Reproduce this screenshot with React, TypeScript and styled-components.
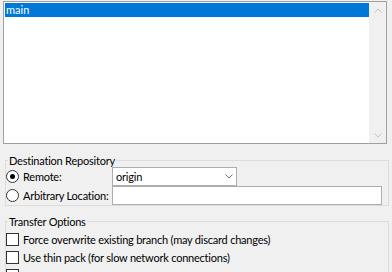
import React from 'react'
import styled, { createGlobalStyle } from 'styled-components'

const GlobalStyle = createGlobalStyle`
  html, body {
    margin: 0;
    padding: 0;
    background: #f0f0f0;
    overflow: hidden;
  }
  body {
    font-family: Lato, 'Noto Sans', sans-serif;
    font-size: 11px;
    letter-spacing: -0.22px;
    color: #000;
  }
`

const Page = styled.div`
  display: flex;
  flex-direction: column;
  padding: 1px 0 0 0;
  width: 392px;
  height: 272px;
  box-sizing: border-box;
  overflow: hidden;
  & > * {
    flex: none;
  }
`

const ListBox = styled.div`
  display: flex;
  margin: 0 5px 0 3px;
  height: 143px;
  box-sizing: border-box;
  border: 1px solid #a0a0a0;
  background: #fff;
`

const ListItems = styled.div`
  flex: 1;
  padding: 1px 0 0 1px;
`

const ListRow = styled.div<{ selected?: boolean }>`
  height: 14px;
  line-height: 13px;
  padding-left: 1px;
  letter-spacing: 0;
  background: ${({ selected }) => (selected ? '#0078d7' : 'transparent')};
  color: ${({ selected }) => (selected ? '#fff' : '#000')};
`

const ScrollBar = styled.div`
  width: 17px;
  background: #f0f0f0;
  display: flex;
  flex-direction: column;
  justify-content: space-between;
  align-items: center;
  padding: 6px 0 5px;
`

const Group = styled.fieldset<{ top: number }>`
  margin: ${({ top }) => top}px 3px 0 5px;
  padding: 0 5px 0 0;
  border: 1px solid #dcdcdc;
  min-width: 0;
`

const Legend = styled.legend`
  margin-left: 2px;
  padding: 0 1px;
  line-height: 13px;
`

const FormGrid = styled.div`
  display: grid;
  grid-template-columns: 106px auto;
  grid-auto-rows: 19px;
`

const Choice = styled.label`
  display: flex;
  align-items: center;
  gap: 4px;
  white-space: nowrap;
`

const Radio = styled.span<{ checked?: boolean }>`
  width: 11px;
  height: 11px;
  border: 1px solid #333;
  border-radius: 50%;
  background: #fff;
  display: flex;
  align-items: center;
  justify-content: center;
  flex: none;
  &::after {
    content: '';
    width: 5px;
    height: 5px;
    border-radius: 50%;
    background: ${({ checked }) => (checked ? '#000' : 'transparent')};
  }
`

const Combo = styled.div`
  width: 125px;
  height: 19px;
  box-sizing: border-box;
  border: 1px solid #adadad;
  background: #fff;
  display: flex;
  align-items: center;
  justify-content: space-between;
  padding: 0 3px 0 3px;
`

const TextField = styled.div`
  width: 270px;
  height: 19px;
  box-sizing: border-box;
  border: 1px solid #adadad;
  background: #fff;
`

const CheckList = styled.div`
  display: flex;
  flex-direction: column;
  padding-top: 2px;
`

const CheckRow = styled.label`
  display: flex;
  align-items: center;
  gap: 4px;
  height: 18px;
  white-space: nowrap;
`

const CheckBox = styled.span`
  width: 11px;
  height: 11px;
  border: 1px solid #333;
  background: #fff;
  flex: none;
`

const Chevron = ({ up, color }: { up?: boolean; color: string }) => (
  <svg width="8" height="5" viewBox="0 0 8 5">
    <path
      d={up ? 'M0.5 4.5 L4 1 L7.5 4.5' : 'M0.5 0.5 L4 4 L7.5 0.5'}
      fill="none"
      stroke={color}
      strokeWidth="1"
    />
  </svg>
)

export default function App() {
  return (
    <Page>
      <GlobalStyle />
      <ListBox>
        <ListItems>
          <ListRow selected>main</ListRow>
        </ListItems>
        <ScrollBar>
          <Chevron up color="#c2c2c2" />
          <Chevron color="#c2c2c2" />
        </ScrollBar>
      </ListBox>

      <Group top={10}>
        <Legend>Destination Repository</Legend>
        <FormGrid>
          <Choice>
            <Radio checked />
            Remote:
          </Choice>
          <Combo>
            origin
            <Chevron color="#707070" />
          </Combo>
          <Choice>
            <Radio />
            Arbitrary Location:
          </Choice>
          <TextField />
        </FormGrid>
      </Group>

      <Group top={9}>
        <Legend>Transfer Options</Legend>
        <CheckList>
          <CheckRow>
            <CheckBox />
            Force overwrite existing branch (may discard changes)
          </CheckRow>
          <CheckRow>
            <CheckBox />
            Use thin pack (for slow network connections)
          </CheckRow>
          <CheckRow>
            <CheckBox />
          </CheckRow>
        </CheckList>
      </Group>
    </Page>
  )
}
